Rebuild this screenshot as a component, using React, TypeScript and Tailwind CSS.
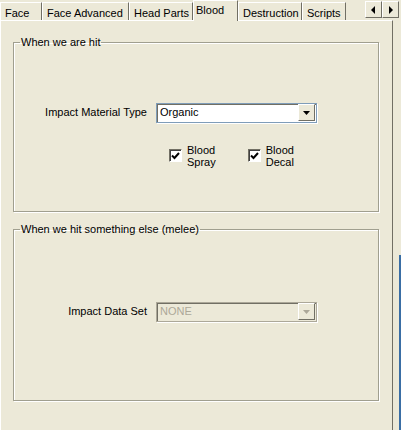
import React from 'react';

const tabs = [
  { label: 'Face', w: 'w-[42px]' },
  { label: 'Face Advanced', w: 'w-[87px]' },
  { label: 'Head Parts', w: 'w-[64px]' },
  { label: 'Blood', w: 'w-[45px]', active: true },
  { label: 'Destruction', w: 'w-[64px]' },
  { label: 'Scripts', w: 'w-[44px]' },
];

function Arrow({ dir }: { dir: 'left' | 'right' }) {
  return (
    <div className="w-[17px] h-[17px] bg-[#ECE9D8] border border-t-white border-l-white border-r-[#716F64] border-b-[#716F64] flex items-center justify-center">
      <svg width="5" height="8" viewBox="0 0 5 8">
        {dir === 'left' ? <path d="M4 0 L0 4 L4 8 Z" fill="#000" /> : <path d="M1 0 L5 4 L1 8 Z" fill="#000" />}
      </svg>
    </div>
  );
}

function Combo({ value, disabled }: { value: string; disabled?: boolean }) {
  return (
    <div
      className={`w-[161px] h-[20px] flex items-center border ${
        disabled ? 'bg-[#ECE9D8] border-[#ACA899]' : 'bg-white border-[#7F9DB9]'
      } shadow-[inset_1px_1px_0_#716F64,1px_1px_0_#fff]`}
    >
      <span className={`flex-1 pl-[3px] ${disabled ? 'text-[#ACA899]' : 'text-black'}`}>{value}</span>
      <div className="w-[17px] h-[17px] mr-[1px] bg-[#ECE9D8] border border-t-white border-l-white border-r-[#716F64] border-b-[#716F64] flex items-center justify-center">
        <svg width="7" height="4" viewBox="0 0 7 4">
          <path d="M0 0 H7 L3.5 4 Z" fill={disabled ? '#ACA899' : '#000'} />
        </svg>
      </div>
    </div>
  );
}

function Check({ line1, line2 }: { line1: string; line2: string }) {
  return (
    <div className="flex items-center gap-[5px]">
      <div className="w-[13px] h-[13px] bg-white border border-t-[#716F64] border-l-[#716F64] border-r-white border-b-white shadow-[inset_1px_1px_0_#404040] flex items-center justify-center">
        <svg width="9" height="8" viewBox="0 0 9 8">
          <path d="M1 3.5 L3.5 6 L8 1" stroke="#000" strokeWidth="2" fill="none" />
        </svg>
      </div>
      <div className="leading-[12px]">
        <div>{line1}</div>
        <div>{line2}</div>
      </div>
    </div>
  );
}

function Group({ title, children, className }: { title: string; children: React.ReactNode; className: string }) {
  return (
    <fieldset
      className={`mx-[12px] w-[366px] border border-[#A09F8F] shadow-[inset_1px_1px_0_#fff,1px_1px_0_#fff] px-0 ${className}`}
    >
      <legend className="ml-[6px] px-[1px]">{title}</legend>
      {children}
    </fieldset>
  );
}

export default function App() {
  return (
    <div className="w-[401px] h-[430px] bg-[#ECE9D8] text-[11px] text-black overflow-hidden flex font-['Liberation_Sans',Arial,sans-serif]">
      <div className="w-[399px] flex flex-col">
        {/* Tab strip */}
        <div className="flex items-end h-[20px] relative">
          {tabs.map((t) =>
            t.active ? (
              <div
                key={t.label}
                className={`${t.w} h-[21px] -mb-[1px] relative z-10 bg-[#ECE9D8] border-l border-t border-r border-l-white border-t-white border-r-[#716F64] pl-[2px] pt-[1px]`}
              >
                {t.label}
              </div>
            ) : (
              <div
                key={t.label}
                className={`${t.w} h-[18px] bg-[#ECE9D8] border-l border-t border-r border-l-white border-t-white border-r-[#716F64] pl-[4px] pt-[2px]`}
              >
                {t.label}
              </div>
            )
          )}
          <div className="absolute right-0 top-[1px] flex">
            <Arrow dir="left" />
            <Arrow dir="right" />
          </div>
        </div>

        {/* Panel */}
        <div className="flex-1 w-[393px] border-t border-l border-r border-t-white border-l-white border-r-[#716F64] pt-[13px]">
          <Group title="When we are hit" className="h-[178px]">
            <div className="flex items-center mt-[52px]">
              <div className="w-[142px] text-right pr-[9px]">Impact Material Type</div>
              <Combo value="Organic" />
            </div>
            <div className="flex gap-[32px] ml-[155px] mt-[21px]">
              <Check line1="Blood" line2="Spray" />
              <Check line1="Blood" line2="Decal" />
            </div>
          </Group>

          <Group title="When we hit something else (melee)" className="h-[180px] mt-[9px]">
            <div className="flex items-center mt-[64px]">
              <div className="w-[142px] text-right pr-[9px]">Impact Data Set</div>
              <Combo value="NONE" disabled />
            </div>
          </Group>
        </div>
      </div>
      <div className="w-[2px] flex flex-col">
        <div className="h-[255px]" />
        <div className="flex-1 bg-[#3A6EA5]" />
      </div>
    </div>
  );
}
